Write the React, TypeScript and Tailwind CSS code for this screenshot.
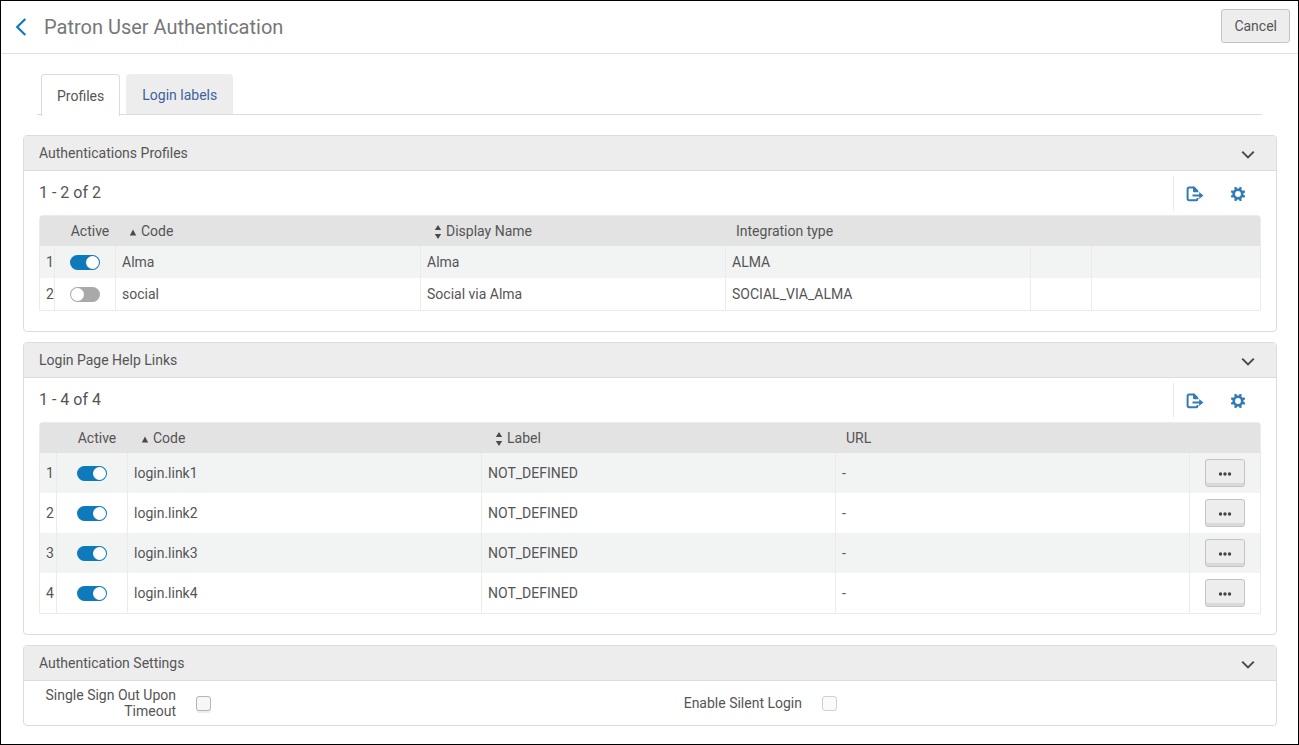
import { useState, type ReactNode } from 'react';

function BackIcon() {
  return (
    <svg width="12" height="18" viewBox="0 0 12 18" fill="none" stroke="#0f7abb" strokeWidth="2.2" aria-hidden="true">
      <path d="M10.3 1 2.2 9l8.1 8" />
    </svg>
  );
}

function ChevronIcon() {
  return (
    <svg width="14" height="10" viewBox="0 0 14 10" fill="none" stroke="#4a4a4a" strokeWidth="2" aria-hidden="true">
      <path d="M1.2 1.6 7 7.4l5.8-5.8" />
    </svg>
  );
}

function ExportIcon() {
  return (
    <svg width="18" height="16" viewBox="0 0 18 16" fill="none" stroke="#337ab7" aria-hidden="true">
      <path d="M11.5 12v1a1.2 1.2 0 0 1-1.200 1.200H3A1.400 1.400 0 0 1 1.600 12.800V3A1.400 1.400 0 0 1 3 1.600h4.800L11.400 5.200" strokeWidth="2" />
      <path d="M7 .8h1.400l4 4v1.400H8.200A1.200 1.200 0 0 1 7 5z" fill="#337ab7" stroke="none" />
      <path d="M6.500 9.500h8" strokeWidth="1.800" />
      <path d="M13.200 6 17.400 9.500 13.200 13z" fill="#337ab7" stroke="none" />
    </svg>
  );
}

const toothAngles = [22.5, 67.5, 112.5, 157.5, 202.5, 247.5, 292.5, 337.5];

function GearIcon() {
  return (
    <svg width="16" height="16" viewBox="0 0 16 16" aria-hidden="true">
      <circle cx="8" cy="8" r="4.2" fill="none" stroke="#337ab7" strokeWidth="2.6" />
      {toothAngles.map((angle) => (
        <path key={angle} d="M6.500 3.600 6.900.6h2.200l.4 3z" fill="#337ab7" transform={`rotate(${angle} 8 8)`} />
      ))}
    </svg>
  );
}

function SortAscIcon() {
  return (
    <svg className="mt-0.5" width="8" height="14" viewBox="0 0 8 14" fill="#4a4a4a" aria-hidden="true">
      <path d="M4 4.500 7.200 10.500H.8z" />
    </svg>
  );
}

function SortIcon() {
  return (
    <svg className="mt-0.5" width="8" height="14" viewBox="0 0 8 14" fill="#4a4a4a" aria-hidden="true">
      <path d="M4 0 7.200 5H.8zM4 14 .8 9h6.400z" />
    </svg>
  );
}

function Switch({ label, initial }: { label: string; initial: boolean }) {
  const [on, setOn] = useState(initial);
  return (
    <input
      type="checkbox"
      role="switch"
      aria-label={label}
      checked={on}
      onChange={() => setOn(!on)}
      className="mx-auto flex h-[15px] w-[30px] cursor-pointer appearance-none rounded-full bg-[#a9a9a9] p-px before:block before:size-[13px] before:rounded-full before:bg-white before:content-[''] checked:bg-[#0f7abb] checked:before:ml-auto"
    />
  );
}

function Panel({ title, children }: { title: string; children: ReactNode }) {
  const [open, setOpen] = useState(true);
  return (
    <section className="overflow-hidden rounded border border-[#dcdcdc]">
      <h2 className={open ? 'border-b border-[#dcdcdc]' : ''}>
        <button
          type="button"
          aria-expanded={open}
          onClick={() => setOpen(!open)}
          className="flex h-[34px] w-full items-center justify-between bg-[#ededed] pr-[21px] pl-[15px]"
        >
          {title}
          <span className="pt-1">
            <ChevronIcon />
          </span>
        </button>
      </h2>
      {open && children}
    </section>
  );
}

function Toolbar({ count }: { count: string }) {
  return (
    <div className="flex h-11 items-center justify-between">
      <span className="text-base">{count}</span>
      <div className="flex h-[34px] items-center gap-[26px] border-l border-[#e8e8e8] pt-0.5 pr-[15px] pl-3">
        <button type="button" aria-label="Export">
          <ExportIcon />
        </button>
        <button type="button" aria-label="Table settings">
          <GearIcon />
        </button>
      </div>
    </div>
  );
}

const tableClass =
  'w-full table-fixed border-separate border-spacing-0 rounded-t-sm border border-[#ebebeb] text-left';
const headRow = 'h-[30px] bg-[#e3e3e3]';
const cell = 'border-l border-[#ebebeb] px-1.5';
const sortButton = 'flex items-center gap-1 pl-3.5';

const profiles = [
  { code: 'Alma', name: 'Alma', type: 'ALMA', active: true },
  { code: 'social', name: 'Social via Alma', type: 'SOCIAL_VIA_ALMA', active: false },
];

const links = ['login.link1', 'login.link2', 'login.link3', 'login.link4'];

function ProfilesTable() {
  return (
    <table className={tableClass}>
      <colgroup>
        <col className="w-[14px]" />
        <col className="w-[5%]" />
        <col className="w-[25%]" />
        <col className="w-[25%]" />
        <col className="w-[25%]" />
        <col className="w-[5%]" />
        <col />
      </colgroup>
      <thead>
        <tr className={headRow}>
          <th />
          <th className="pl-[11px] text-center font-normal">Active</th>
          <th className="font-normal">
            <button type="button" className={sortButton}>
              <SortAscIcon />
              Code
            </button>
          </th>
          <th className="font-normal">
            <button type="button" className={sortButton}>
              <SortIcon />
              Display Name
            </button>
          </th>
          <th className="pl-[11px] font-normal">Integration type</th>
          <th />
          <th />
        </tr>
      </thead>
      <tbody>
        {profiles.map((row, i) => (
          <tr key={row.code} className="h-8 odd:bg-[#f2f4f4]">
            <td className="pl-1.5">{i + 1}</td>
            <td className={cell}>
              <Switch label={`${row.code} active`} initial={row.active} />
            </td>
            <td className={cell}>{row.code}</td>
            <td className={cell}>{row.name}</td>
            <td className={cell}>{row.type}</td>
            <td className={cell} />
            <td className={cell} />
          </tr>
        ))}
      </tbody>
    </table>
  );
}

function LinksTable() {
  return (
    <table className={tableClass}>
      <colgroup>
        <col className="w-4" />
        <col className="w-[71px]" />
        <col />
        <col />
        <col />
        <col className="w-[71px]" />
      </colgroup>
      <thead>
        <tr className={headRow}>
          <th />
          <th className="pl-[11px] text-center font-normal">Active</th>
          <th className="font-normal">
            <button type="button" className={sortButton}>
              <SortAscIcon />
              Code
            </button>
          </th>
          <th className="font-normal">
            <button type="button" className={sortButton}>
              <SortIcon />
              Label
            </button>
          </th>
          <th className="pl-[11px] font-normal">URL</th>
          <th />
        </tr>
      </thead>
      <tbody>
        {links.map((code, i) => (
          <tr key={code} className="h-10 odd:bg-[#f2f4f4]">
            <td className="pl-1.5">{i + 1}</td>
            <td className={cell}>
              <Switch label={`${code} active`} initial />
            </td>
            <td className={cell}>{code}</td>
            <td className={cell}>NOT_DEFINED</td>
            <td className={cell}>-</td>
            <td className={cell}>
              <button
                type="button"
                aria-label={`More actions for ${code}`}
                className="mx-auto flex h-7 w-10 items-center justify-center rounded-[3px] border border-[#c4c4c4] bg-[#ededed] pt-0.5 shadow-[inset_0_-3px_0_#dadada]"
              >
                <svg width="14" height="4" viewBox="0 0 14 4" fill="#444" aria-hidden="true">
                  <circle cx="2.5" cy="2" r="1.7" />
                  <circle cx="7" cy="2" r="1.7" />
                  <circle cx="11.5" cy="2" r="1.7" />
                </svg>
              </button>
            </td>
          </tr>
        ))}
      </tbody>
    </table>
  );
}

const checkbox =
  'size-[15px] appearance-none rounded-[3px] border border-[#b4b4b4] bg-[#f7f7f7] shadow-[0_2px_0_#eeeeee] checked:bg-[#0f7abb] disabled:border-[#d0d0d0] disabled:bg-[#fafafa] disabled:shadow-none';

export default function App() {
  return (
    <div className="min-h-screen border border-black bg-white font-['Roboto',sans-serif] text-sm leading-4 text-[#555]">
      <header className="flex h-[53px] items-center justify-between border-b border-[#e0e0e0] pr-2 pl-3.5">
        <div className="flex items-center gap-[17px]">
          <a href="#back" aria-label="Back">
            <BackIcon />
          </a>
          <h1 className="text-xl text-[#777]">Patron User Authentication</h1>
        </div>
        <button type="button" className="mb-0.5 h-[34px] rounded-[3px] border border-[#c4c4c4] bg-[#ededed] px-3">
          Cancel
        </button>
      </header>

      <nav className="mx-9 mt-5 flex items-start gap-1.5 border-b border-[#dcdcdc] pl-1" aria-label="Sections">
        <a
          href="#profiles"
          aria-current="page"
          className="-mb-0.5 flex h-[42px] items-center rounded-t border border-b-0 border-[#dcdcdc] bg-white px-[15px]"
        >
          Profiles
        </a>
        <a href="#labels" className="flex h-10 items-center rounded-t bg-[#ededed] px-4 pt-0.5 text-[#3f5fa3]">
          Login labels
        </a>
      </nav>

      <main className="mr-[21px] mb-4 ml-[22px] mt-5 flex flex-col gap-2.5">
        <Panel title="Authentications Profiles">
          <div className="px-[15px] pb-5">
            <Toolbar count="1 - 2 of 2" />
            <ProfilesTable />
          </div>
        </Panel>

        <Panel title="Login Page Help Links">
          <div className="px-[15px] pb-5">
            <Toolbar count="1 - 4 of 4" />
            <LinksTable />
          </div>
        </Panel>

        <Panel title="Authentication Settings">
          <div className="grid h-11 grid-cols-2 items-center">
            <div className="flex items-center gap-5">
              <label htmlFor="single-sign-out" className="w-[152px] pl-3 text-right">
                Single Sign Out Upon Timeout
              </label>
              <input id="single-sign-out" type="checkbox" className={checkbox} />
            </div>
            <div className="flex items-center gap-5">
              <label htmlFor="silent-login" className="w-[152px] pl-3 text-right">
                Enable Silent Login
              </label>
              <input id="silent-login" type="checkbox" disabled className={checkbox} />
            </div>
          </div>
        </Panel>
      </main>
    </div>
  );
}
